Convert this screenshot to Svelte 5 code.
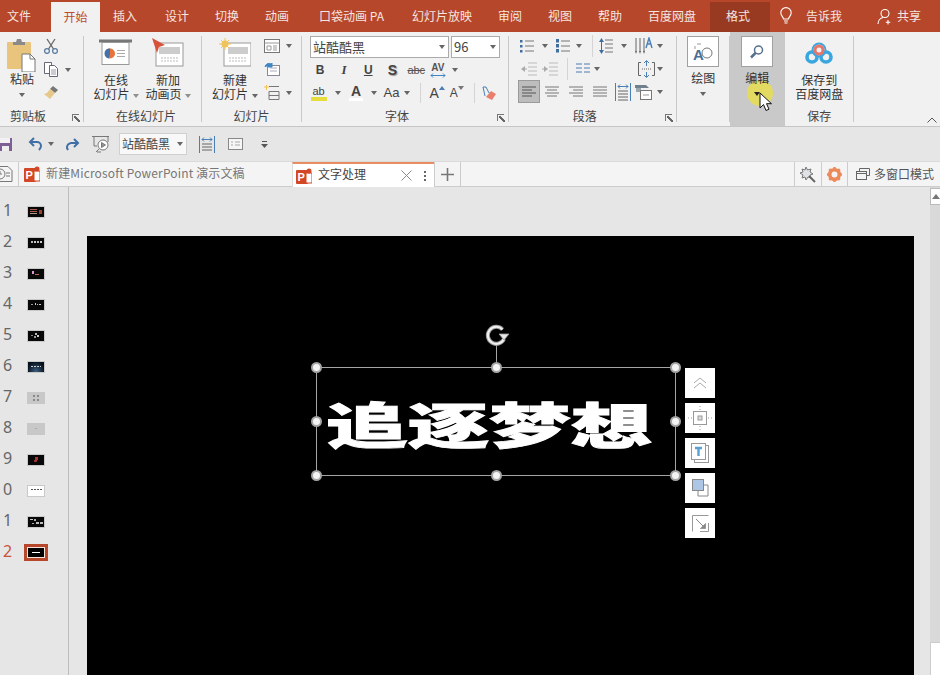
<script>
  const menu = [
    ['文件','first'],['开始','active'],['插入',''],['设计','m2'],['切换',''],['动画',''],
    ['口袋动画 PA','m4'],['幻灯片放映','m2'],['审阅',''],['视图',''],['帮助',''],['百度网盘','']
  ];
  const thumbs = [
    { n:'1', c:'dark', s:[[2,2,7,1,'#a85a4c'],[2,4,7,1,'#a85a4c'],[2,6,7,1,'#a98'],[11,3,3,4,'#943']] },
    { n:'2', c:'dark', s:[[3,3,2,2,'#bbb'],[6,3,2,2,'#ccc'],[9,3,2,2,'#bbb'],[12,3,2,2,'#ccc']] },
    { n:'3', c:'dark', s:[[4,2,2,3,'#d9c'],[7,5,4,1,'#b65']] },
    { n:'4', c:'dark', s:[[3,4,2,1,'#999'],[7,3,1,2,'#ccc'],[9,4,1,1,'#bbb'],[11,4,2,1,'#ccc']] },
    { n:'5', c:'dark', s:[[3,4,2,1,'#888'],[7,2,2,2,'#bbb'],[9,4,2,2,'#ccc'],[6,5,2,2,'#999']] },
    { n:'6', c:'navy', s:[[3,4,2,1,'#ccc'],[6,4,2,1,'#ccc'],[9,4,2,1,'#ccc'],[12,4,1,1,'#ccc']] },
    { n:'7', c:'grey', s:[[5,2,2,2,'#888'],[9,2,2,2,'#888'],[5,6,2,2,'#888'],[9,6,2,2,'#888']] },
    { n:'8', c:'grey', s:[[7,4,2,1,'#aaa']] },
    { n:'9', c:'dark', s:[[7,2,3,3,'#a33'],[6,5,3,2,'#933']] },
    { n:'0', c:'white', s:[[3,3,2,1,'#555'],[6,3,2,1,'#555'],[9,3,2,1,'#555'],[12,3,2,1,'#555']] },
    { n:'1', c:'dark', s:[[2,2,3,1,'#ccc'],[6,2,2,2,'#aaa'],[8,5,3,2,'#bbb'],[12,5,3,2,'#bbb'],[4,6,2,1,'#aaa']] },
  ];
  const handles = ['tl','tc','tr','ml','mr','bl','bc','br'];
  const qlines = [0,1,2];
</script>

<div class="app">
  <header class="menubar">
    {#each menu as [t, c]}
      <span class="mi {c}">{t}</span>
    {/each}
    <span class="mi format">格式</span>
    <span class="right">
      <svg width="14" height="18" viewBox="0 0 14 18" fill="none" stroke="#fff" stroke-width="1.1"><path d="M4.5 12c0-2-2.7-3-2.7-6.200a5.200 5.200 0 0 1 10.400 0C12.200 9 9.500 10 9.500 12zM5 14h4M5.500 16h3"/></svg>
      <span class="tell">告诉我</span>
      <svg class="user" width="16" height="17" viewBox="0 0 16 17" fill="none" stroke="#fff" stroke-width="1.1"><circle cx="8" cy="5.500" r="4"/><path d="M1 16c0-3.500 2.500-6 5-6.500M11 12v4.500M8.800 14.300h4.500"/></svg>
      <span class="share">共享</span>
    </span>
  </header>

  <section class="ribbon">
    <div class="grp g1">
      <div class="body flexrow">
        <div class="big paste">
          <svg width="30" height="34" viewBox="0 0 30 34">
            <rect x="0" y="4" width="24" height="27" rx="1" fill="#e9c47c"/>
            <path d="M6 4h3l1-3h4l1 3h3v3H6z" fill="#8a8a8a"/>
            <path d="M15 16h8l5 5v13H15z" fill="#fff" stroke="#777"/>
            <path d="M23 16v5h5" fill="none" stroke="#777"/>
          </svg>
          <span class="t">粘贴</span>
          <i class="caret mt"></i>
        </div>
        <div class="smallcol">
          <svg width="16" height="16" viewBox="0 0 16 16" fill="none" stroke="#5b7da0" stroke-width="1.300"><path d="M4 1l6.500 10M12 1L5.500 11" stroke="#666"/><circle cx="4" cy="13" r="2.400"/><circle cx="12" cy="13" r="2.400"/></svg>
          <span class="ic-c"><svg width="16" height="15" viewBox="0 0 16 15" fill="#fff" stroke="#667"><path d="M1.500.5h7v11h-7z"/><path d="M6.500 3.500h5l3 3v8h-8z"/><path d="M8 8h5M8 10h5M8 12h5" stroke="#99a"/></svg><i class="caret cm"></i></span>
          <svg width="17" height="16" viewBox="0 0 17 16"><path d="M10 1l5 4-3 3-5-4z" fill="#777"/><path d="M7 4l5 4-5 6-6-5 3-1z" fill="#e6c88a"/></svg>
        </div>
      </div>
      <div class="lbl">剪贴板</div>
      <i class="launch"></i>
    </div>

    <div class="grp g2">
      <div class="body flexrow">
        <div class="big w52">
          <svg width="34" height="27" viewBox="0 0 34 27">
            <rect x="0" y="0" width="33" height="3" fill="#777"/>
            <rect x="3" y="3" width="27" height="22" fill="#fff" stroke="#999"/>
            <circle cx="11" cy="14" r="5" fill="#e8743b"/><path d="M11 14V9a5 5 0 0 0-1 10z" fill="#4472a8"/>
            <path d="M18 11h8M18 14h8M18 17h8" stroke="#aaa"/>
          </svg>
          <span class="t">在线</span>
          <span class="t">幻灯片<i class="caret tiny"></i></span>
        </div>
        <div class="big w52">
          <svg width="34" height="30" viewBox="0 0 34 30">
            <rect x="5" y="5" width="27" height="23" fill="#fff" stroke="#999"/>
            <rect x="8" y="9" width="21" height="7" fill="#ccc"/>
            <path d="M10 20h17M10 23h17" stroke="#bbb" stroke-dasharray="2 1"/>
            <path d="M1 0l13 7-6 2-2 6z" fill="#d8523a"/>
          </svg>
          <span class="t">新加</span>
          <span class="t">动画页<i class="caret tiny"></i></span>
        </div>
      </div>
      <div class="lbl">在线幻灯片</div>
    </div>

    <div class="grp g3">
      <div class="body flexrow">
        <div class="big w52">
          <svg width="32" height="30" viewBox="0 0 32 30">
            <rect x="5" y="5" width="27" height="23" fill="#fff" stroke="#999"/>
            <rect x="9" y="9" width="20" height="7" fill="#ccc"/>
            <path d="M10 20h17M10 23h17" stroke="#bbb" stroke-dasharray="2 1"/>
            <circle cx="6" cy="6" r="3.500" fill="#f0c45a"/>
            <path d="M6 0v12M0 6h12M2 2l8 8M10 2l-8 8" stroke="#f0c45a"/>
          </svg>
          <span class="t">新建</span>
          <span class="t">幻灯片<i class="caret"></i></span>
        </div>
        <div class="smallcol s3">
          <span class="ic-c"><svg width="16" height="14" viewBox="0 0 16 14" fill="#fff" stroke="#777"><rect x=".5" y=".5" width="15" height="13"/><path d="M.5 4h15M3 7h4v4H3zM9 7h4M9 9h4M9 11h4" stroke="#999"/></svg><i class="caret cm"></i></span>
          <svg class="sh" width="16" height="14" viewBox="0 0 16 14" fill="#fff" stroke="#889"><rect x="3.500" y="3.500" width="12" height="10"/><path d="M6 6h7M6 9h7" stroke="#aab"/><path d="M1 5a4 4 0 0 1 6-3l1-1v4H4l1-1" fill="#3f87c5" stroke="#3f87c5"/></svg>
          <span class="ic-c"><svg width="16" height="15" viewBox="0 0 16 15" fill="none" stroke="#777"><path d="M5 1.500h10M5 6.500h10v8H5zM5 10.500h10"/><path d="M0 2h5M2.500 0v5" stroke="#f0c45a"/></svg><i class="caret cm"></i></span>
        </div>
      </div>
      <div class="lbl">幻灯片</div>
    </div>

    <div class="grp g4">
      <div class="body">
        <div class="fontrow">
          <span class="combo name">站酷酷黑<i class="caret"></i></span>
          <span class="combo size">96<i class="caret"></i></span>
        </div>
        <div class="rowg fr2">
          <b class="fmt">B</b><i class="fmt it">I</i><u class="fmt und">U</u><span class="fmt sh-t">S</span><span class="abc">abc</span>
          <span class="av">AV<svg width="16" height="5" viewBox="0 0 16 5" fill="none" stroke="#3f87c5"><path d="M1 2.500h14M3 .5L1 2.500l2 2M13 .5l2 2-2 2"/></svg></span><i class="caret"></i>
        </div>
        <div class="rowg fr3">
          <span class="hl">ab<em></em></span><i class="caret"></i>
          <span class="ca">A<em></em></span><i class="caret"></i>
          <span class="aa">Aa</span><i class="caret"></i>
          <span class="vs"></span>
          <span class="grow">A<svg width="6" height="4" viewBox="0 0 6 4"><path d="M0 4l3-4 3 4z" fill="#4a7fb5"/></svg></span>
          <span class="grow sm">A<svg width="6" height="4" viewBox="0 0 6 4"><path d="M0 0l3 4 3-4z" fill="#777"/></svg></span>
          <span class="vs"></span>
          <svg width="16" height="16" viewBox="0 0 16 16"><path d="M9 6l5 3-4 6-6-3z" fill="#e87f6d"/><path d="M3 11L1 2h3l3 6" fill="none" stroke="#4a7fb5"/></svg>
        </div>
      </div>
      <div class="lbl">字体</div>
      <i class="launch"></i>
    </div>

    <div class="grp g5">
      <div class="body">
        <div class="rowg p1">
          <svg width="14" height="14" viewBox="0 0 14 14"><path d="M5 2h9M5 7h9M5 12h9" stroke="#777"/><path d="M0 1h2.500v2.500H0zM0 6h2.500v2.500H0zM0 11h2.500v2.500H0z" fill="#3f6f9f"/></svg><i class="caret"></i>
          <svg width="14" height="14" viewBox="0 0 14 14"><path d="M5 2h9M5 7h9M5 12h9" stroke="#777"/><path d="M0 0h3v3.500H0zM0 5h3v3.500H0zM0 10h3v3.500H0z" fill="#3f6f9f"/></svg><i class="caret"></i>
          <span class="vs tall"></span>
          <svg width="14" height="16" viewBox="0 0 14 16"><path d="M6 2h8M6 6h8M6 10h8M6 14h8" stroke="#777"/><path d="M2.500 1v14" stroke="#3f6f9f"/><path d="M0 4l2.500-4L5 4zM0 12l2.500 4L5 12z" fill="#3f6f9f"/></svg><i class="caret"></i>
          <svg width="18" height="18" viewBox="0 0 18 18"><path d="M1 1v14M5 1v14M9 1v14" stroke="#666"/><path d="M0 14l1 3 1-3zM4 14l1 3 1-3zM8 14l1 3 1-3z" fill="#666"/><path d="M11 11l3-10 3 10M12 7h4" fill="none" stroke="#4a7fb5" stroke-width="1.400"/></svg><i class="caret"></i>
        </div>
        <div class="rowg p2">
          <svg width="16" height="14" viewBox="0 0 16 14"><path d="M7 1h9M7 5h9M7 9h9M7 13h9" stroke="#bbb"/><path d="M0 7l4-3v6z" fill="#aaa"/><path d="M3 7h3" stroke="#aaa"/></svg>
          <svg width="16" height="14" viewBox="0 0 16 14"><path d="M7 1h9M7 5h9M7 9h9M7 13h9" stroke="#bbb"/><path d="M6 7L2 4v6z" fill="#aaa"/><path d="M0 7h3" stroke="#aaa"/></svg>
          <span class="vs tall"></span>
          <svg width="14" height="11" viewBox="0 0 14 11"><path d="M0 1h6M0 5h6M0 9h6M8 1h6M8 5h6M8 9h6" stroke="#4a7fb5"/></svg><i class="caret"></i>
          <span></span>
          <svg width="17" height="18" viewBox="0 0 17 18" fill="none" stroke="#666"><path d="M3 2.500H.5v13H3M14 2.500h2.500v13H14" /><path d="M4 9h9" stroke-dasharray="1 1"/><path d="M8.500 1v5M8.500 12v5" stroke="#4a7fb5"/><path d="M6 3l2.500-2.500L11 3M6 15l2.500 2.500L11 15" stroke="#4a7fb5"/></svg><i class="caret"></i>
        </div>
        <div class="rowg p3">
          <span class="sel"><svg width="14" height="11" viewBox="0 0 14 11"><path d="M0 1h14M0 4h10M0 7h14M0 10h10" stroke="#555"/></svg></span>
          <svg width="14" height="11" viewBox="0 0 14 11"><path d="M0 1h14M2 4h10M0 7h14M2 10h10" stroke="#777"/></svg>
          <svg width="14" height="11" viewBox="0 0 14 11"><path d="M0 1h14M4 4h10M0 7h14M4 10h10" stroke="#777"/></svg>
          <svg width="14" height="11" viewBox="0 0 14 11"><path d="M0 1h14M0 4h14M0 7h14M0 10h14" stroke="#777"/></svg>
          <svg width="16" height="18" viewBox="0 0 16 18"><path d="M.5 0v18M15.500 0v18" stroke="#4a7fb5"/><path d="M3 8h10M3 11h10M3 14h10M3 17h10" stroke="#666"/><path d="M3 3.500h10M5 1.500l-2 2 2 2M11 1.500l2 2-2 2" fill="none" stroke="#4a7fb5"/></svg>
          <svg width="17" height="16" viewBox="0 0 17 16"><path d="M0 1h11l3 3H0z" fill="#70808c"/><path d="M1 4h5v4H1z" fill="#9aa7b0"/><rect x="5.500" y="6.500" width="11" height="9" fill="#fff" stroke="#777"/><path d="M8 11h6" stroke="#999"/></svg><i class="caret"></i>
        </div>
      </div>
      <div class="lbl">段落</div>
      <i class="launch"></i>
    </div>

    <div class="grp g6">
      <div class="body col">
        <span class="box"><svg width="22" height="22" viewBox="0 0 22 22"><path d="M5 3h4M3 5v3" stroke="#999" fill="none"/><circle cx="15" cy="12" r="5" fill="#fff" stroke="#777"/><text x="1" y="19" class="boxA">A</text></svg></span>
        <span class="t tb">绘图</span>
        <i class="caret mt2"></i>
      </div>
    </div>

    <div class="grp g7">
      <div class="body col">
        <span class="box"><svg width="16" height="16" viewBox="0 0 16 16" fill="none"><circle cx="9.500" cy="6" r="4" stroke="#54708f" stroke-width="1.500"/><path d="M6.500 9L2 13.500" stroke="#54708f" stroke-width="2.500"/></svg></span>
        <span class="t tb">编辑</span>
        <i class="caret mt2 dk"></i>
      </div>
      <span class="spot"></span>
      <svg class="cursor" width="14" height="20" viewBox="0 0 14 20"><path d="M1 1v15l3.500-3.500L7 18.500l3-1.300-2.500-5.500H12.500z" fill="#fff" stroke="#111" stroke-width="1"/></svg>
    </div>

    <div class="grp g8">
      <div class="body col">
        <svg class="cloud" width="28" height="22" viewBox="0 0 28 22" fill="none">
          <circle cx="14" cy="8" r="6.500" stroke="#3aa6e0" stroke-width="2"/>
          <circle cx="7" cy="15" r="5" stroke="#3aa6e0" stroke-width="3.600"/>
          <circle cx="21" cy="15" r="5" stroke="#3aa6e0" stroke-width="3.600"/>
          <circle cx="14" cy="8" r="4" stroke="#e8756a" stroke-width="3"/>
        </svg>
        <span class="t">保存到</span>
        <span class="t">百度网盘</span>
      </div>
      <div class="lbl">保存</div>
    </div>

    <div class="g9">
      <svg width="10" height="6" viewBox="0 0 10 6" fill="none" stroke="#555"><path d="M.5 5.500L5 1l4.500 4.500"/></svg>
    </div>
  </section>

  <section class="qat">
    <svg class="q-save" width="14" height="15" viewBox="0 0 14 15"><path d="M0 1h13v13H0z" fill="#7d5f95"/><rect x="1" y="1" width="10" height="5" fill="#f2f2f2"/><rect x="3" y="9" width="7" height="5" fill="#eee"/></svg>
    <svg class="q-undo" width="15" height="14" viewBox="0 0 15 14" fill="none" stroke="#3f6fa5" stroke-width="2"><path d="M6 1L2 5l4 4M2 5h7a4 4 0 0 1 4 4c0 2-1 3-2 4"/></svg>
    <i class="caret q-c"></i>
    <svg class="q-redo" width="15" height="13" viewBox="0 0 15 13" fill="none" stroke="#3f6fa5" stroke-width="2"><path d="M9 1l4 4-4 4M13 5H6a4.500 4.500 0 0 0-4 5l1 2"/></svg>
    <svg class="q-show" width="18" height="18" viewBox="0 0 18 18" fill="none" stroke="#777"><path d="M0 1.500h17M2 2v9h3M16 2v5"/><circle cx="11" cy="10" r="5" fill="#fff"/><path d="M9.500 7.500v5l4-2.500z" fill="#999"/><path d="M7 14l-3 3M5 17h4"/></svg>
    <span class="q-combo">站酷酷黑<i class="caret"></i></span>
    <svg class="q-i1" width="16" height="17" viewBox="0 0 16 17"><path d="M.5 0v17M15.500 0v17" stroke="#4a7fb5"/><path d="M3 8h10M3 11h10M3 14h10" stroke="#666"/><path d="M3 3.500h10M5 1.500l-2 2 2 2M11 1.500l2 2-2 2" fill="none" stroke="#4a7fb5"/></svg>
    <svg class="q-i2" width="15" height="12" viewBox="0 0 15 12" fill="#f6f6f6" stroke="#888"><rect x=".5" y=".5" width="14" height="11"/><path d="M3 4h2M3 7h2M7 4h5M7 7h5" stroke="#aaa"/></svg>
    <svg class="q-i3" width="7" height="9" viewBox="0 0 7 9"><path d="M1 1.500h5" stroke="#555"/><path d="M0 4h7L3.500 8z" fill="#555"/></svg>
  </section>

  <nav class="tabs">
    <span class="hist"><svg width="18" height="16" viewBox="0 0 18 16" fill="#f4f4f4" stroke="#777"><path d="M4 .5h9l4 4v11H4z"/><circle cx="5" cy="8" r="5"/><path d="M5 5v3h2M11 7h4M11 10h4" /></svg></span>
    <span class="tab t1">
      <svg width="16" height="16" viewBox="0 0 16 16"><rect y="2" width="12" height="14" rx="1" fill="#d24726"/><rect x="10" y="5" width="6" height="10" fill="#fff" stroke="#d24726"/><circle cx="13" cy="3" r="2.500" fill="#d24726"/><text x="1.500" y="13" class="pp">P</text></svg>
      <span class="tt">新建Microsoft PowerPoint 演示文稿</span>
    </span>
    <span class="tab t2">
      <svg width="16" height="16" viewBox="0 0 16 16"><rect y="2" width="12" height="14" rx="1" fill="#d24726"/><rect x="10" y="5" width="6" height="10" fill="#fff" stroke="#d24726"/><circle cx="13" cy="3" r="2.500" fill="#d24726"/><text x="1.500" y="13" class="pp">P</text></svg>
      <span class="tt cur">文字处理</span>
      <svg class="x" width="11" height="11" viewBox="0 0 11 11" stroke="#888"><path d="M.5.5l10 10M10.500.5l-10 10"/></svg>
      <span class="dots">
        {#each qlines as q}<em></em>{/each}
      </span>
    </span>
    <span class="plus"><svg width="13" height="13" viewBox="0 0 13 13" stroke="#777" stroke-width="1.600"><path d="M6.500 0v13M0 6.500h13"/></svg></span>
    <span class="fill"></span>
    <span class="tool"><svg width="17" height="17" viewBox="0 0 17 17"><path d="M7 1l1.500 3L12 3l-1 3 3 2-3 1 1 3-3-1-2 3-1-3-3 1 1-3-3-2 3-1-1-3 3 1z" fill="#dfe3e8" stroke="#777"/><path d="M10 10l6 6" stroke="#666" stroke-width="2"/></svg></span>
    <span class="tool"><svg width="15" height="15" viewBox="0 0 15 15"><circle cx="7.500" cy="7.500" r="4.800" fill="none" stroke="#ed8a5a" stroke-width="3.600"/><path d="M7.500 0v3M7.500 12v3M0 7.500h3M12 7.500h3M2.200 2.200l2 2M10.800 10.800l2 2M12.800 2.200l-2 2M4.200 10.800l-2 2" stroke="#ed8a5a" stroke-width="2.400"/></svg></span>
    <span class="multi">
      <svg width="14" height="12" viewBox="0 0 14 12" fill="none" stroke="#666"><path d="M3.500 3V.5h10v7H11"/><rect x=".5" y="3.500" width="10" height="8"/><path d="M.5 5.500h10"/></svg>
      <span>多窗口模式</span>
    </span>
  </nav>

  <main class="main">
    <aside class="side">
      {#each thumbs as th}
        <div class="srow">
          <span class="num">{th.n}</span>
          <svg class="thumb {th.c}" width="18" height="12" viewBox="-1 -1 18 12">
            {#each th.s as [x, y, w, h, f]}
              <rect {x} {y} width={w} height={h} fill={f}/>
            {/each}
          </svg>
        </div>
      {/each}
      <div class="srow">
        <span class="num red">2</span>
        <span class="selthumb"><em></em></span>
      </div>
    </aside>

    <div class="canvas">
      <div class="slide">
        <div class="selection">
          <span class="stem"></span>
          <svg class="rot" width="26" height="24" viewBox="0 0 26 24" fill="none">
            <path d="M18.500 5.500A8.500 8.500 0 1 0 20 15" stroke="#9a9a9a" stroke-width="4"/>
            <path d="M18.500 5.500A8.500 8.500 0 1 0 20 15" stroke="#f0f0f0" stroke-width="2"/>
            <path d="M15 10h10l-5 6z" fill="#e8e8e8" stroke="#999" stroke-width=".8"/>
          </svg>
          <span class="headline">追逐梦想</span>
          {#each handles as h}
            <span class="h {h}"></span>
          {/each}
        </div>
        <div class="floats">
          <span class="fb"><svg width="14" height="12" viewBox="0 0 14 12" fill="none" stroke="#aaa"><path d="M1 6l6-5 6 5M1 11l6-5 6 5"/></svg></span>
          <span class="fb"><svg width="24" height="24" viewBox="0 0 24 24" fill="none" stroke="#999"><rect x="5.500" y="5.500" width="13" height="13"/><rect x="10" y="10" width="4" height="4" fill="#ddd"/><path d="M12 0v4M12 20v4M0 12h4M20 12h4" stroke-dasharray="1 2"/></svg></span>
          <span class="fb"><svg width="18" height="20" viewBox="0 0 18 20" fill="none" stroke="#999"><rect x="3.500" y="2.500" width="14" height="17"/><rect x=".5" y=".5" width="14" height="16" fill="#fff"/><path d="M4 5h7M7.500 5v8" stroke="#5aa0d0" stroke-width="2.400"/></svg></span>
          <span class="fb"><svg width="17" height="18" viewBox="0 0 17 18" fill="none" stroke="#888"><path d="M6 6h10v11H6"/><path d="M6 6v11"/><rect x=".5" y=".5" width="11" height="11" fill="#aec6e6"/></svg></span>
          <span class="fb"><svg width="17" height="17" viewBox="0 0 17 17" fill="none" stroke="#999"><path d="M.5 16.500V.5h16M16.500 8v8.500H8"/><path d="M4 4l9 9" stroke="#888"/><path d="M13.500 8.500v5h-5z" fill="#888"/></svg></span>
        </div>
      </div>
    </div>

    <div class="scroll">
      <span class="up"><i class="tri"></i></span>
      <span class="track"></span>
      <span class="thumbbar"></span>
    </div>
  </main>
</div>

<style>
  :global(body){margin:0;background:#e6e6e6;overflow:hidden}
  .app{width:940px;height:675px;display:flex;flex-direction:column;overflow:hidden;font:12px/14px "Noto Sans CJK SC","Noto Sans",sans-serif;color:#444}
  svg{display:block;flex:none}
  i,em{display:block;font-style:normal}
  .pp{font:700 11px "Liberation Sans",sans-serif;fill:#fff}

  .menubar{height:32px;background:#b7472a;display:flex;align-items:stretch;color:#f5e5e0;flex:none}
  .mi{display:flex;align-items:center;padding:0 13px;white-space:nowrap}
  .mi.first{padding:0 20px 0 7px}
  .mi.active{background:#f1f1f1;color:#c0492a;padding:0 12.500px;margin-top:2px}
  .mi.m2{margin-left:2px}
  .mi.m4{margin-left:4px}
  .mi.format{background:#983a22;width:60px;box-sizing:border-box;margin:2px 0 0 1px;padding:0 4px 2px 0;justify-content:center}
  .right{margin-left:auto;display:flex;align-items:center;padding-right:19px}
  .tell{margin-left:13px}
  .user{margin-left:35px}
  .share{margin-left:4px}

  .ribbon{height:95px;box-sizing:border-box;background:#f1f1f1;border-bottom:1px solid #c6c6c6;display:flex;flex:none}
  .grp{position:relative;display:flex;flex-direction:column;box-sizing:border-box;height:94px}
  .grp::after{content:"";position:absolute;right:0;top:4px;bottom:4px;width:1px;background:#c9c9c9}
  .body{flex:1;min-height:0}
  .flexrow{display:flex}
  .lbl{height:21px;line-height:21px;text-align:center;color:#444;flex:none}
  .g1 .lbl{padding-right:28px}
  .g3 .lbl{padding-right:8px}
  .g4 .lbl{padding-right:23px}
  .g5 .lbl{padding-right:24px}
  .launch{position:absolute;right:5px;bottom:5px;width:7px;height:7px;border-left:1px solid #777;border-top:1px solid #777;box-sizing:border-box}
  .launch::after{content:"";position:absolute;left:1px;top:1px;width:6px;height:6px;background:linear-gradient(45deg,transparent 0 40%,#666 40% 60%,transparent 60%)}
  .caret{display:inline-block;width:0;height:0;border:3.500px solid transparent;border-top:4px solid #666;border-bottom:0;margin-left:4px;vertical-align:middle}
  .caret.tiny{border-width:3px;border-top-width:4px;border-bottom:0;margin-left:3px;opacity:.7}
  .caret.mt{margin:7px 0 0}
  .caret.mt2{margin:7px 0 0}
  .caret.cm{margin-left:6px}
  .caret.dk{border-top-color:#222;position:relative;z-index:3}

  .g1{width:84px}
  .big{display:flex;flex-direction:column;align-items:center}
  .big > svg{height:34px}
  .paste{width:30px;margin-left:7px;padding-top:6px}
  .t{white-space:nowrap;line-height:14px;color:#333}
  .smallcol{margin:6px 0 0 6px;display:flex;flex-direction:column;gap:8px}
  .ic-c{display:flex;align-items:center}

  .g2{width:118px;padding-left:6px}
  .w52{width:52px;padding-top:4px}
  .w52 > svg{margin-bottom:3px}
  .g3{width:100px;padding-left:7px}
  .s3{margin:7px 0 0 3px;gap:9px}

  .g4{width:207px;padding:4px 0 0 6px}
  .fontrow{display:flex;gap:2px;margin-left:2px;height:23px}
  .combo{background:#fff;border:1px solid #ababab;height:22px;box-sizing:border-box;display:flex;align-items:center;justify-content:space-between;padding:0 3px 0 2px;color:#444;font-size:13px}
  .combo.name{width:139px}
  .combo.size{width:49px}
  .rowg{display:grid;height:23px;align-items:center;justify-items:center}
  .fr2{grid-template-columns:24px 24px 24.500px 24px 23.500px 19.500px 14.500px;height:22px}
  .fr3{grid-template-columns:21px 18px 18px 18px 17px 13.500px 14px 19.500px 19.500px 15.500px 16px;height:24px}
  .rowg .caret{margin:0}
  .fmt{font:700 12px/14px "Liberation Sans",sans-serif;color:#444}
  .it{font-family:"Liberation Serif",serif;font-style:italic;font-size:13px}
  .und{text-decoration:underline}
  .sh-t{font-size:14px;text-shadow:1px 1px 1px #999}
  .abc{font:11px/12px "Liberation Sans",sans-serif;text-decoration:line-through;color:#555}
  .av{display:flex;flex-direction:column;align-items:center;font:700 10px/10px "Liberation Sans",sans-serif;color:#555}
  .hl{font:11px/11px "Liberation Sans",sans-serif;width:16px;text-align:center}
  .hl em{height:4px;background:#e6dc3c}
  .ca{font:700 14px/13px "Liberation Sans",sans-serif;width:14px;text-align:center;color:#444}
  .ca em{height:3px;background:#fff}
  .aa{font:13px/14px "Liberation Sans",sans-serif}
  .vs{width:1px;height:20px;background:#d4d4d4}
  .vs.tall{height:22px}
  .grow{display:flex;font:14px/14px "Liberation Sans",sans-serif;align-items:flex-start}
  .grow.sm{font-size:12px}

  .g5{width:167.500px;padding:2px 0 0 8px}
  .p1{grid-template-columns:19px 18px 18px 13.500px 13px 15.500px 20px 19px 14px}
  .p2{grid-template-columns:23px 19.500px 15.500px 15px 14px 35px 14px 14px}
  .p3{grid-template-columns:23px 24px 24px 23.500px 23px 18.500px 14px}
  .sel{width:22px;height:23px;box-sizing:border-box;background:#bdbdbd;border:1px solid #9a9a9a;display:flex;align-items:center;justify-content:center}

  .col{display:flex;flex-direction:column;align-items:center}
  .g6{width:53.500px}
  .g6 .col,.g7 .col{padding-top:4px}
  .box{width:32px;height:31px;box-sizing:border-box;background:#fff;border:1px solid #a0a0a0;display:flex;align-items:center;justify-content:center}
  .boxA{font:700 15px "Liberation Sans",sans-serif;fill:#4a6f96}
  .tb{margin-top:4px}
  .g7{width:54.500px;background:#c9c9c9;margin-left:0}
  .g7::after{display:none}
  .spot{position:absolute;left:17px;top:48px;width:26px;height:26px;border-radius:50%;background:#e6dc55;opacity:.9}
  .g7 .tb,.g7 .caret{position:relative;z-index:2}
  .cursor{position:absolute;left:29px;top:60px;z-index:3}
  .g8{width:69.500px}
  .cloud{margin-top:10px;margin-bottom:9px}
  .g9{flex:1;position:relative;display:flex;justify-content:flex-end;align-items:flex-end;padding:0 3px 3px 0}

  .qat{height:35px;box-sizing:border-box;background:#e6e6e6;display:flex;align-items:center;flex:none;border-bottom:1px solid #dadada}
  .q-save{margin-left:-1px}
  .q-undo{margin-left:15px}
  .caret.q-c{margin-left:5px}
  .q-redo{margin-left:11px}
  .q-show{margin-left:12px}
  .q-combo{margin-left:9px;width:68px;height:22px;box-sizing:border-box;background:#f8f8f8;border:1px solid #d0d0d0;display:flex;align-items:center;justify-content:space-between;padding:0 3px 0 2px;color:#444}
  .q-i1{margin-left:12px}
  .q-i2{margin-left:13px}
  .q-i3{margin-left:18px}

  .tabs{height:25px;box-sizing:border-box;background:#f4f4f4;border-bottom:1px solid #ccc;display:flex;align-items:stretch;flex:none}
  .hist{width:19px;display:flex;align-items:center;justify-content:flex-end;padding-right:5px;box-sizing:border-box;border-right:1px solid #ccc;overflow:hidden}
  .tab{display:flex;align-items:center;box-sizing:border-box}
  .tt{padding-bottom:2px}
  .t1{width:272px;padding-left:4px;margin-left:1px;gap:6px}
  .tt{color:#777;white-space:nowrap;letter-spacing:.15px}
  .tt.cur{color:#444;letter-spacing:0;padding-bottom:4px}
  .t2{width:142px;background:#fff;border-top:2px solid #ea8c61;border-left:1px solid #ddd;padding-left:3px;gap:6px;margin-bottom:-1px}
  .x{margin-left:29px}
  .dots{margin-left:6px;display:flex;flex-direction:column;gap:2px}
  .dots em{width:2px;height:2px;background:#666}
  .plus{width:27px;border-right:1px solid #ccc;border-left:1px solid #ccc;display:flex;align-items:center;justify-content:center;box-sizing:border-box}
  .fill{flex:1}
  .tool{width:26.500px;border-left:1px solid #ccc;display:flex;align-items:center;justify-content:center;box-sizing:border-box}
  .multi{width:93px;box-sizing:border-box;border-left:1px solid #ccc;display:flex;align-items:center;gap:4px;padding-left:8px;color:#555;white-space:nowrap}

  .main{flex:1;min-height:0;display:flex;background:#e6e6e6}
  .side{width:69px;box-sizing:border-box;border-right:1px solid #bdbdbd;padding-top:9px;flex:none;background:#e6e6e6}
  .srow{height:31px;display:flex;align-items:center;position:relative}
  .num{width:27px;padding:0 0 3px 3px;box-sizing:border-box;font:16px/18px "Noto Sans",sans-serif;color:#666}
  .num.red{color:#c9533a}
  .thumb{width:18px;height:12px;box-sizing:border-box}
  .thumb.dark{background:#080808;box-shadow:inset 0 0 0 1px #c9c9c9}
  .thumb.navy{background:radial-gradient(ellipse at 50% 90%,#3d5f80,#06101c 70%);box-shadow:inset 0 0 0 1px #c9c9c9}
  .thumb.grey{background:#c8c8c8}
  .thumb.white{background:#fff;box-shadow:inset 0 0 0 1px #c9c9c9}
  .selthumb{margin-left:-3px;width:24px;height:17px;box-sizing:border-box;border:3px solid #b7472a;background:#f5e3dc;padding:1px;display:block}
  .selthumb em{height:100%;background:#000 linear-gradient(#fff,#fff) center/8px 1px no-repeat}

  .canvas{flex:1;min-width:0;padding:49px 16px 0 18px;overflow:hidden;box-sizing:border-box}
  .slide{position:relative;background:#000;height:100%}
  .selection{position:absolute;left:229px;top:131px;width:358px;height:107px;border:1px solid #a5a5a5;box-sizing:content-box}
  .headline{position:absolute;left:9px;top:7px;width:340px;height:95px;font:900 81.500px/95px "Noto Sans CJK SC",sans-serif;color:#fff;letter-spacing:0;white-space:nowrap;transform:scale(1,.6);transform-origin:center;-webkit-text-stroke:1.500px #fff}
  .stem{position:absolute;left:179px;top:-23px;width:1px;height:23px;background:#a5a5a5}
  .rot{position:absolute;left:167px;top:-44px}
  .h{position:absolute;width:11px;height:11px;box-sizing:border-box;border-radius:50%;background:#f4f4f4;border:2px solid #a5a5a5;z-index:2}
  .tl{left:-6px;top:-6px}.tc{left:174px;top:-6px}.tr{left:353px;top:-6px}
  .ml{left:-6px;top:48px}.mr{left:353px;top:48px}
  .bl{left:-6px;top:102px}.bc{left:174px;top:102px}.br{left:353px;top:102px}
  .floats{position:absolute;left:598px;top:132px;display:flex;flex-direction:column;gap:5px}
  .fb{width:30px;height:30px;background:#fff;display:flex;align-items:center;justify-content:center}

  .scroll{width:10px;flex:none;display:flex;flex-direction:column;background:#d9d9d9}
  .up{height:17px;background:#fff;border:1px solid #bbb;border-right:0;box-sizing:border-box;display:flex;align-items:center;justify-content:center;flex:none;margin-top:1px}
  .tri{width:0;height:0;border:4px solid transparent;border-bottom:5px solid #777;border-top:0}
  .track{flex:1}
  .thumbbar{height:33px;background:#fff;border-left:1px solid #ccc;border-top:1px solid #ccc;box-sizing:border-box;flex:none}
</style>
